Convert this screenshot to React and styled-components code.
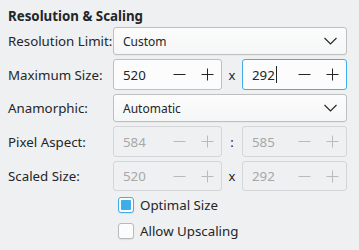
import React from "react";
import styled, { createGlobalStyle } from "styled-components";

const Global = createGlobalStyle`
  html, body { margin: 0; padding: 0; background: #eff0f1; }
  body { font-family: "Noto Sans", "DejaVu Sans", sans-serif; color: #232629; }
`;

const Panel = styled.div`
  width: 359px;
  height: 250px;
  box-sizing: border-box;
  padding: 7px 12px 0 8px;
  display: flex;
  flex-direction: column;
`;

const Title = styled.div`
  font-weight: 700;
  font-size: 13.3px;
  line-height: 18px;
  margin-bottom: 2px;
`;

const Form = styled.div`
  display: grid;
  grid-template-columns: 105px 1fr;
  row-gap: 4px;
  align-items: center;
`;

const Label = styled.div`
  font-size: 13.3px;
  line-height: 18px;
  white-space: nowrap;
`;

const Combo = styled.div`
  height: 28px;
  box-sizing: border-box;
  border: 1px solid #bdbfc1;
  border-radius: 3px;
  background: linear-gradient(#fcfcfc, #f5f6f6);
  display: flex;
  align-items: center;
  justify-content: space-between;
  padding: 0 9px 0 9px;
  font-size: 12px;
  box-shadow: 0 1px 0 rgba(0,0,0,0.03);
`;

const Pair = styled.div`
  display: grid;
  grid-template-columns: 109px 20px 1fr;
  align-items: center;
`;

const Sep = styled.div`
  text-align: center;
  font-size: 13px;
  color: #232629;
`;

const Spin = styled.div`
  height: ${p => p.$h || 31}px;
  box-sizing: border-box;
  border: 1px solid ${p => (p.$focus ? "#3daee9" : p.$disabled ? "#d3d5d6" : "#bdbfc1")};
  border-radius: 3px;
  background: ${p => (p.$disabled ? "#eff0f1" : "#fcfcfc")};
  display: flex;
  align-items: center;
  padding-left: 9px;
  font-size: 13.3px;
  color: ${p => (p.$disabled ? "#a6a8aa" : "#232629")};
`;

const Value = styled.span`
  flex: 1;
  display: flex;
  align-items: center;
`;

const Caret = styled.span`
  display: inline-block;
  width: 1px;
  height: 17px;
  background: #232629;
  margin-left: 1px;
`;

const Btn = styled.span`
  width: 28px;
  display: flex;
  align-items: center;
  justify-content: center;
  color: ${p => (p.$disabled ? "#b8babc" : "#232629")};
`;

const Checks = styled.div`
  display: flex;
  flex-direction: column;
  gap: 10px;
  padding-left: 110px;
  margin-top: 6px;
`;

const CheckRow = styled.label`
  display: flex;
  align-items: center;
  gap: 6px;
  font-size: 13.3px;
  line-height: 16px;
`;

const Box = styled.span`
  width: 16px;
  height: 16px;
  box-sizing: border-box;
  border: 1px solid ${p => (p.$checked ? "#3daee9" : "#b7b9bb")};
  border-radius: 3px;
  background: #fcfcfc;
  display: flex;
  align-items: center;
  justify-content: center;
  box-shadow: 0 1px 1px rgba(0,0,0,0.08);
`;

const Mark = styled.span`
  width: 10px;
  height: 10px;
  background: #3daee9;
  border-radius: 1px;
`;

const Minus = () => (
  <svg width="13" height="13" viewBox="0 0 13 13">
    <path d="M0.5 6.5H12.5" stroke="currentColor" strokeWidth="1" fill="none" />
  </svg>
);
const Plus = () => (
  <svg width="13" height="13" viewBox="0 0 13 13">
    <path d="M0.5 6.5H12.5M6.5 0.5V12.5" stroke="currentColor" strokeWidth="1" fill="none" />
  </svg>
);
const Chevron = () => (
  <svg width="13" height="8" viewBox="0 0 13 8">
    <path d="M0.5 1L6.5 7L12.5 1" stroke="#232629" strokeWidth="1.1" fill="none" />
  </svg>
);

const SpinBox = ({ value, disabled, focus, caret, h }) => (
  <Spin $disabled={disabled} $focus={focus} $h={h}>
    <Value>
      {value}
      {caret && <Caret />}
    </Value>
    <Btn $disabled={disabled}><Minus /></Btn>
    <Btn $disabled={disabled}><Plus /></Btn>
  </Spin>
);

export default function App() {
  return (
    <>
      <Global />
      <Panel>
        <Title>Resolution &amp; Scaling</Title>
        <Form>
          <Label>Resolution Limit:</Label>
          <Combo><span>Custom</span><Chevron /></Combo>

          <Label>Maximum Size:</Label>
          <Pair>
            <SpinBox value="520" />
            <Sep>x</Sep>
            <SpinBox value="292" focus caret />
          </Pair>

          <Label>Anamorphic:</Label>
          <Combo><span>Automatic</span><Chevron /></Combo>

          <Label>Pixel Aspect:</Label>
          <Pair>
            <SpinBox value="584" disabled />
            <Sep>:</Sep>
            <SpinBox value="585" disabled />
          </Pair>

          <Label>Scaled Size:</Label>
          <Pair>
            <SpinBox value="520" disabled h={30} />
            <Sep>x</Sep>
            <SpinBox value="292" disabled h={30} />
          </Pair>
        </Form>
        <Checks>
          <CheckRow><Box $checked><Mark /></Box>Optimal Size</CheckRow>
          <CheckRow><Box />Allow Upscaling</CheckRow>
        </Checks>
      </Panel>
    </>
  );
}
